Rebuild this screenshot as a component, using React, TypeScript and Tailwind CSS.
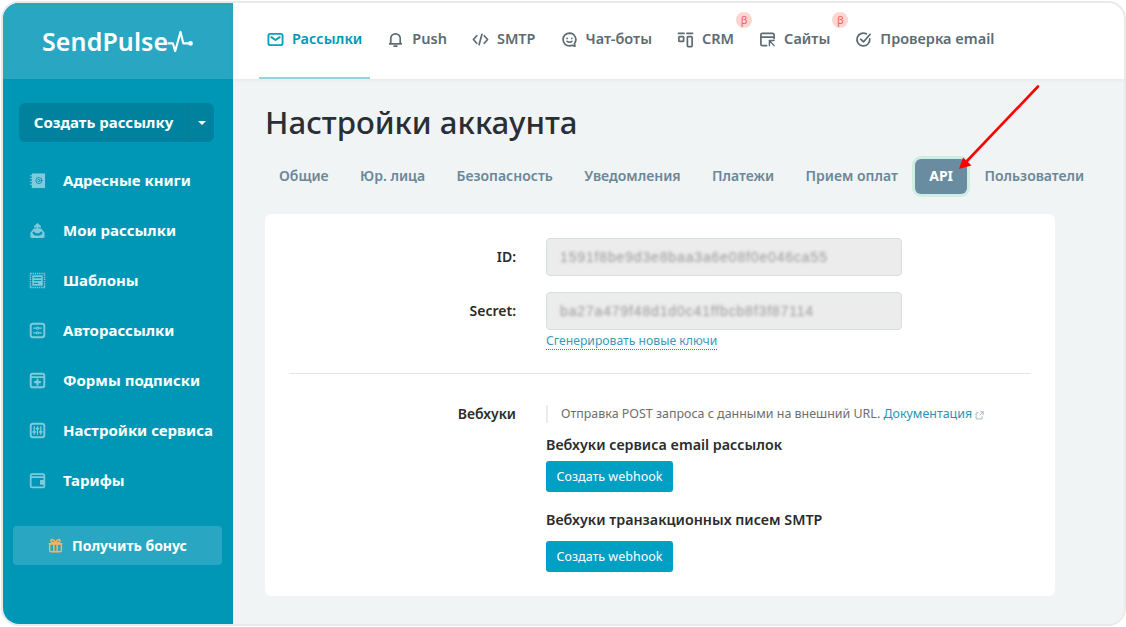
import React from "react";

const ff = "font-['Noto_Sans','Open_Sans',sans-serif]";

type IP = { children: React.ReactNode; cls?: string };
const Ico = ({ children, cls = "w-[17px] h-[17px]" }: IP) => (
  <svg viewBox="0 0 18 18" fill="none" stroke="currentColor" strokeWidth="1.8" strokeLinecap="round" strokeLinejoin="round" className={`shrink-0 ${cls}`}>
    {children}
  </svg>
);

const sideItems: [string, React.ReactNode][] = [
  ["Адресные книги", <><rect x="3" y="1.5" width="14" height="15.5" fill="currentColor" stroke="none" /><circle cx="10.5" cy="9" r="3.2" stroke="#0097b7" strokeWidth="1" /><circle cx="10.5" cy="9" r="1.2" stroke="#0097b7" strokeWidth="0.8" /><path d="M1 4h3M1 7h3M1 10h3M1 13h3" strokeWidth="1" strokeLinecap="butt" /></>],
  ["Мои рассылки", <><path d="M5 7 1.5 11.5V15a2 2 0 0 0 2 2h11a2 2 0 0 0 2-2v-3.5L13 7Z" fill="currentColor" stroke="none" /><path d="M5 11.5c1.2 2.2 6.8 2.2 8 0" stroke="#0097b7" strokeWidth="2.6" /><path d="M9 11V2.5M6.3 5 9 2.2 11.7 5" strokeWidth="2" /></>],
  ["Шаблоны", <><rect x="1.5" y="1.5" width="15" height="15" strokeWidth="1.6" strokeDasharray="1.4 0.9" strokeLinecap="butt" /><rect x="3.5" y="3.5" width="11" height="11" fill="currentColor" stroke="none" /><path d="M5.5 6h7M5.5 9h7M5.5 12h4" stroke="#0097b7" strokeWidth="1.2" /></>],
  ["Авторассылки", <><rect x="1.8" y="1.8" width="14.4" height="14.4" rx="2.5" strokeWidth="2" /><path d="M5 6.5h2.5M10.5 6.5H13M5 11.5h2M10.5 11.5H13" strokeWidth="1.5" /><circle cx="9" cy="6.5" r="1.1" strokeWidth="1.1" /><circle cx="9" cy="11.5" r="1.1" strokeWidth="1.1" /></>],
  ["Формы подписки", <><rect x="1.8" y="1.8" width="14.4" height="14.4" rx="2" strokeWidth="2" /><path d="M2 5.5h14" /><path d="M9 8v5.5M6.2 10.7h5.6" strokeWidth="2.2" /></>],
  ["Настройки сервиса", <><rect x="1.8" y="1.8" width="14.4" height="14.4" rx="2.5" strokeWidth="2" /><path d="M5.5 5v8M9 5v8M12.5 5v8" strokeWidth="1.4" /><path d="M4.5 10.5h2M8 7h2M11.5 10.5h2" strokeWidth="2" /></>],
  ["Тарифы", <><path d="M16.2 5.5V3.5a1.3 1.3 0 0 0-1.3-1.3H3.1a1.3 1.3 0 0 0-1.3 1.3V15a1.3 1.3 0 0 0 1.3 1.3h11.8a1.3 1.3 0 0 0 1.3-1.3V5.5H2.5" /><path d="M16 9.5h-3.5v3H16" fill="currentColor" /></>],
];

const topItems: { label: string; icon: React.ReactNode; active?: boolean; beta?: boolean }[] = [
  { label: "Рассылки", active: true, icon: <><rect x="1.5" y="3" width="15" height="12" rx="2" strokeWidth="2" /><path d="m4.5 6.5 4.5 3 4.5-3" strokeWidth="2" /></> },
  { label: "Push", icon: <><path d="M4 12.5V8a5 5 0 0 1 10 0v4.5l1.2 1.2H2.8Z" /><path d="M7.5 16h3" /></> },
  { label: "SMTP", icon: <><path d="M5 5 1.5 9 5 13M13 5l3.5 4-3.5 4M10.5 3.5l-3 11" /></> },
  { label: "Чат-боты", icon: <><path d="M9 2.2a6.8 6.8 0 1 0 0 13.6c1 0 2-.2 2.8-.6l3 .8-.6-2.8A6.8 6.8 0 0 0 9 2.2Z" /><path d="M6.5 7.8v.1M11.5 7.8v.1M6.5 11c1.3 1.1 3.7 1.1 5 0" /></> },
  { label: "CRM", beta: true, icon: <><path d="M1.5 2.5h6M10.5 2.5h6" /><rect x="2" y="6" width="5" height="5" rx="0.8" /><rect x="11" y="6" width="5" height="10.5" rx="0.8" /></> },
  { label: "Сайты", beta: true, icon: <><path d="M16 8V4a1.5 1.5 0 0 0-1.5-1.5h-11A1.5 1.5 0 0 0 2 4v10a1.5 1.5 0 0 0 1.5 1.5H8M2 6.5h14" /><path d="M11 10v5.5M11 10h5M11 10l5 5.5" strokeWidth="1.5" /></> },
  { label: "Проверка email", icon: <><path d="M15.6 8.2A6.8 6.8 0 1 1 12 3" /><path d="m6 8.5 3 3 7-8" /></> },
];

const tabs = ["Общие", "Юр. лица", "Безопасность", "Уведомления", "Платежи", "Прием оплат", "API", "Пользователи"];

function KeyField({ label, value }: { label: string; value: string }) {
  return (
    <div className="flex items-center h-[38px]">
      <div className="w-[251px] text-right text-[14px] font-semibold text-[#2b2b2b] pb-[2px]">{label}</div>
      <div className="ml-[30px] w-[356px] h-[38px] rounded-[4px] border border-[#d5e0df] bg-[#ececec] flex items-center pl-[13px] overflow-hidden">
        <span className="text-[14px] tracking-[0.85px] text-[#9a9a9a] blur-[1.4px] font-['Liberation_Sans',sans-serif] whitespace-nowrap">{value}</span>
      </div>
    </div>
  );
}

const WebhookButton = () => (
  <button className="block w-[127px] h-[31px] rounded-[3px] bg-[#00a0c4] text-white text-[12.5px] leading-[29px] text-center">Создать webhook</button>
);

export default function App() {
  return (
    <div className={`relative w-[1126px] h-[627px] bg-white p-px overflow-hidden ${ff}`}>
      <div className="flex h-[625px] w-[1125px] border-2 border-[#e9e9e9] rounded-[18px] overflow-hidden">
        {/* Sidebar */}
        <aside className="w-[230px] shrink-0 bg-[#0097b7] flex flex-col text-white">
          <div className="h-[76px] bg-[#29a7c2] flex items-center pl-[39px]">
            <span className="text-[25px] leading-none font-semibold tracking-[0.1px]">SendPulse</span>
            <svg viewBox="0 0 28 24" className="w-[27px] h-[23px] -ml-px" fill="none" stroke="white" strokeWidth="2.2" strokeLinecap="round" strokeLinejoin="round">
              <path d="M1.5 14H6l2.5 8L14 2l3 12h6" />
              <circle cx="24.5" cy="14" r="2.4" fill="white" stroke="none" />
            </svg>
          </div>
          <div className="mt-6 ml-4 w-[195px] h-[39px] rounded-[6px] bg-[#00829e] flex items-center">
            <span className="w-[169px] text-center text-[15px] font-bold leading-[39px]">Создать рассылку</span>
            <span className="w-[26px] h-full border-l border-[#0b7a93] flex items-center justify-center">
              <span className="border-x-[4px] border-x-transparent border-t-[4px] border-t-white" />
            </span>
          </div>
          <nav className="mt-[13px] flex flex-col">
            {sideItems.map(([label, icon]) => (
              <div key={label} className="h-[50px] flex items-center pl-[26px]">
                <span className="text-[#7fcbdb]"><Ico>{icon}</Ico></span>
                <span className="ml-[17px] text-[15px] font-bold whitespace-nowrap">{label}</span>
              </div>
            ))}
          </nav>
          <div className="mt-[21px] ml-[10px] w-[209px] h-[39px] rounded-[4px] bg-[#29a7c2] flex items-center justify-center">
            <span className="text-[#fbb25d]">
              <Ico cls="w-[15px] h-[15px]"><rect x="2" y="7" width="14" height="9.5" rx="1.5" /><path d="M1.5 7h15M7 7v9.5M11 7v9.5" /><path d="M9 6C7.5 1.5 3.5 1 3.5 3.2S6 6 9 6ZM9 6c1.5-4.5 5.5-5 5.5-2.8S12 6 9 6Z" /></Ico>
            </span>
            <span className="ml-[9px] text-[14px] font-bold">Получить бонус</span>
          </div>
        </aside>

        {/* Right column */}
        <div className="flex-1 min-w-0 bg-[#f0f4f5] flex flex-col">
          <header className="h-[76px] bg-white shadow-[0_1px_4px_rgba(0,0,0,0.06)] flex items-stretch pl-[26px] gap-[9px]">
            {topItems.map((t) => (
              <div key={t.label} className={`relative flex items-center px-2 pb-[2px] border-b-2 ${t.active ? "border-[#93d3e2]" : "border-transparent"}`}>
                <span className={t.active ? "text-[#0aa0c2]" : "text-[#5d6b73]"}><Ico>{t.icon}</Ico></span>
                <span className={`ml-[8px] text-[14.5px] font-semibold whitespace-nowrap ${t.active ? "text-[#0097b7]" : "text-[#5d6b73]"}`}>{t.label}</span>
                {t.beta && (
                  <span className="absolute right-[-10px] top-[9px] w-4 h-4 rounded-full bg-[#ffd5d2] text-[#f0645f] text-[11px] leading-4 text-center">β</span>
                )}
              </div>
            ))}
          </header>

          <main className="flex-1 pl-[32px]">
            <h1 className="mt-[22px] text-[31.2px] leading-[42px] font-medium text-[#2b2f33]">Настройки аккаунта</h1>
            <div className="mt-[16px] flex gap-[3.4px]">
              {tabs.map((t) => (
                <div
                  key={t}
                  className={`h-[35px] px-[14px] pb-[2px] flex items-center text-[14px] whitespace-nowrap rounded-[6px] ${
                    t === "API" ? "bg-[#6a8ca0] text-white font-bold ring-[3px] ring-[#cfeee2]" : "text-[#6b8798] font-semibold"
                  }`}
                >
                  {t}
                </div>
              ))}
            </div>

            <section className="mt-[20px] w-[790px] h-[382px] bg-white rounded-[6px] pt-[24px]">
              <div className="flex flex-col gap-[16px]">
                <KeyField label="ID:" value="1591f8be9d3e8baa3a6e08f0e046ca55" />
                <KeyField label="Secret:" value="ba27a479f48d1d0c41ffbcb8f3f87114" />
              </div>
              <a className="block w-fit ml-[281px] mt-[2px] text-[12.2px] leading-[17px] text-[#3b9bb3] border-b border-dotted border-[#0097b7]">Сгенерировать новые ключи</a>
              <div className="mx-[24px] mt-[23px] h-px bg-[#e3e6e7]" />
              <div className="mt-[31px] flex">
                <div className="w-[251px] text-right text-[14px] font-semibold text-[#2b2b2b] leading-[18px]">Вебхуки</div>
                <div className="ml-[30px] flex-1">
                  <div className="border-l-2 border-[#ececec] pl-[13px] text-[12.45px] leading-[18px] text-[#6e6e6e] flex items-center whitespace-nowrap">
                    Отправка POST запроса с данными на внешний URL.&nbsp;<span className="text-[#2b93ad]">Документация</span>
                    <svg viewBox="0 0 12 12" className="w-[9px] h-[9px] ml-[3px] mt-[2px]" fill="none" stroke="#9fb3bb" strokeWidth="1.2"><path d="M9.5 7v3.5h-8v-8H5M7 1h4v4M11 1 6 6" /></svg>
                  </div>
                  <h3 className="mt-[12px] text-[14.3px] leading-[20px] font-semibold text-[#2b2b2b]">Вебхуки сервиса email рассылок</h3>
                  <div className="mt-[6px]"><WebhookButton /></div>
                  <h3 className="mt-[18px] text-[14.3px] leading-[20px] font-semibold text-[#2b2b2b]">Вебхуки транзакционных писем SMTP</h3>
                  <div className="mt-[11px]"><WebhookButton /></div>
                </div>
              </div>
            </section>
          </main>
        </div>
      </div>

      {/* Annotation arrow lying over the tabs */}
      <svg viewBox="0 0 100 100" className="absolute left-[945px] top-[80px] w-[100px] h-[100px]" fill="none">
        <path d="M93 6.5 22 81" stroke="#ff0000" strokeWidth="2.6" strokeLinecap="round" />
        <path d="M14 89 18 77.5 26.5 85.5Z" fill="#ff0000" />
      </svg>
    </div>
  );
}
